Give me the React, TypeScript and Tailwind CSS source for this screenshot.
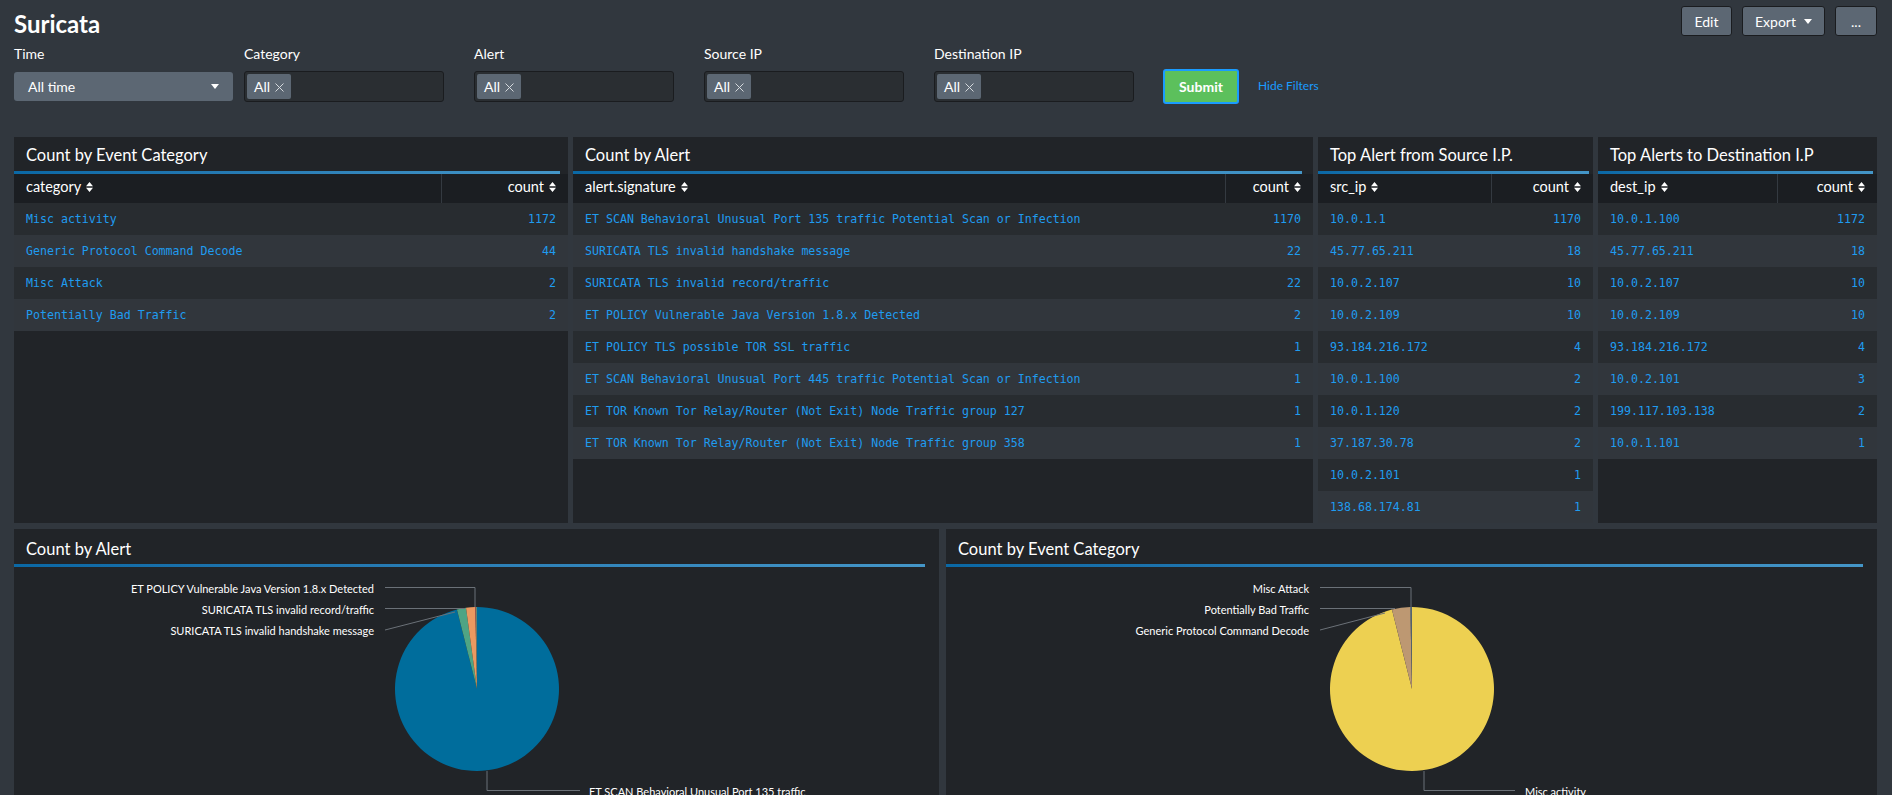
import clsx from "clsx";

type Row = [string, string];

const categoryRows: Row[] = [
  ["Misc activity", "1172"],
  ["Generic Protocol Command Decode", "44"],
  ["Misc Attack", "2"],
  ["Potentially Bad Traffic", "2"],
];

const alertRows: Row[] = [
  ["ET SCAN Behavioral Unusual Port 135 traffic Potential Scan or Infection", "1170"],
  ["SURICATA TLS invalid handshake message", "22"],
  ["SURICATA TLS invalid record/traffic", "22"],
  ["ET POLICY Vulnerable Java Version 1.8.x Detected", "2"],
  ["ET POLICY TLS possible TOR SSL traffic", "1"],
  ["ET SCAN Behavioral Unusual Port 445 traffic Potential Scan or Infection", "1"],
  ["ET TOR Known Tor Relay/Router (Not Exit) Node Traffic group 127", "1"],
  ["ET TOR Known Tor Relay/Router (Not Exit) Node Traffic group 358", "1"],
];

const srcRows: Row[] = [
  ["10.0.1.1", "1170"],
  ["45.77.65.211", "18"],
  ["10.0.2.107", "10"],
  ["10.0.2.109", "10"],
  ["93.184.216.172", "4"],
  ["10.0.1.100", "2"],
  ["10.0.1.120", "2"],
  ["37.187.30.78", "2"],
  ["10.0.2.101", "1"],
  ["138.68.174.81", "1"],
];

const destRows: Row[] = [
  ["10.0.1.100", "1172"],
  ["45.77.65.211", "18"],
  ["10.0.2.107", "10"],
  ["10.0.2.109", "10"],
  ["93.184.216.172", "4"],
  ["10.0.2.101", "3"],
  ["199.117.103.138", "2"],
  ["10.0.1.101", "1"],
];

function SortIcon() {
  return (
    <svg width="7" height="10" viewBox="0 0 7 10" className="ml-[5px] shrink-0">
      <path d="M0 4.2 L3.5 0 L7 4.2 Z M0 5.8 L3.5 10 L7 5.8 Z" fill="currentColor" />
    </svg>
  );
}

function Caret() {
  return (
    <svg width="8" height="5" viewBox="0 0 8 5">
      <path d="M0 0 H8 L4 5 Z" fill="currentColor" />
    </svg>
  );
}

function Chip() {
  return (
    <span className="h-[25px] px-[7px] bg-[#5c6773] rounded-[2px] flex items-center gap-[5px] text-[14px]">
      All
      <svg width="9" height="9" viewBox="0 0 9 9" className="mt-[2px]">
        <path d="M0.5 0.5 L8.5 8.5 M8.5 0.5 L0.5 8.5" stroke="#d5d9dd" strokeWidth="1" />
      </svg>
    </span>
  );
}

function MultiFilter({ label }: { label: string }) {
  return (
    <div className="w-[230px]">
      <div className="text-[14px] leading-[18px]">{label}</div>
      <div className="mt-[8px] w-[200px] h-[31px] bg-[#2a2e32] border border-[#1a1c1f] rounded-[3px] p-[2px] flex">
        <Chip />
      </div>
    </div>
  );
}

function TablePanel({
  title,
  field,
  rows,
  width,
  countWidth,
}: {
  title: string;
  field: string;
  rows: Row[];
  width: string;
  countWidth: string;
}) {
  return (
    <div className={clsx("flex flex-col bg-[#212428]", width)}>
      <div className="h-[34px] px-3 pt-[3px] flex items-center text-[16.5px] whitespace-nowrap">{title}</div>
      <div className="h-[3px] w-[98.5%] bg-linear-to-r from-[#0a68a5] to-[#4496c8]" />
      <div className="h-[29px] flex bg-[#1b1e22] text-[14.5px]">
        <div className="flex-1 flex items-center px-3 pb-[4px]">
          {field}
          <SortIcon />
        </div>
        <div className={clsx("flex items-center justify-end pr-3 pb-[4px] border-l border-[#343a41]", countWidth)}>
          count
          <SortIcon />
        </div>
      </div>
      {rows.map(([k, v], i) => (
        <div
          key={i}
          className={clsx(
            "h-[32px] flex items-center px-3 pt-[1px] text-[11.6px] text-[#1f9cf0] font-[family-name:'DejaVu_Sans_Mono',monospace]",
            i % 2 === 0 ? "bg-[#282c30]" : "bg-[#31363c]"
          )}
        >
          <span className="flex-1 whitespace-nowrap">{k}</span>
          <span>{v}</span>
        </div>
      ))}
    </div>
  );
}

function arc(cx: number, cy: number, r: number, a0: number, a1: number) {
  const rad = (a: number) => ((a - 90) * Math.PI) / 180;
  const x0 = cx + r * Math.cos(rad(a0));
  const y0 = cy + r * Math.sin(rad(a0));
  const x1 = cx + r * Math.cos(rad(a1));
  const y1 = cy + r * Math.sin(rad(a1));
  const large = a1 - a0 > 180 ? 1 : 0;
  return `M${cx},${cy} L${x0},${y0} A${r},${r} 0 ${large} 1 ${x1},${y1} Z`;
}

type Slice = { value: number; color: string };
type Leader = { text: string; d: string; y: number };

function PieChart({
  slices,
  labels,
  bottom,
}: {
  slices: Slice[];
  labels: Leader[];
  bottom: { text: string; d: string; x: number };
}) {
  const cx = 380;
  const cy = 122;
  const r = 82;
  const total = slices.reduce((s, x) => s + x.value, 0);
  let a = 0;
  return (
    <svg width="760" height="240" className="block mx-auto font-[family-name:Lato,sans-serif]">
      {slices.map((s, i) => {
        const a0 = a;
        a += (s.value / total) * 360;
        return <path key={i} d={arc(cx, cy, r, a0, a)} fill={s.color} />;
      })}
      {labels.map((l, i) => (
        <g key={i}>
          <path d={l.d} stroke="#6b7178" strokeWidth="1" fill="none" />
          <text x={cx - 103} y={l.y} textAnchor="end" dominantBaseline="central" fill="#ffffff" fontSize="11">
            {l.text}
          </text>
        </g>
      ))}
      <path d={bottom.d} stroke="#6b7178" strokeWidth="1" fill="none" />
      <text x={bottom.x} y={224} dominantBaseline="central" fill="#ffffff" fontSize="11">
        {bottom.text}
      </text>
    </svg>
  );
}

function PiePanel({ title, width, children }: { title: string; width: string; children: React.ReactNode }) {
  return (
    <div className={clsx("flex flex-col bg-[#212428] h-[300px]", width)}>
      <div className="h-[35px] px-3 pt-[5px] flex items-center text-[16.5px]">{title}</div>
      <div className="h-[3px] w-[98.5%] bg-linear-to-r from-[#0a68a5] to-[#4496c8]" />
      {children}
    </div>
  );
}

export default function App() {
  const cx = 380;
  return (
    <div className="h-[795px] overflow-hidden bg-[#31373e] text-white font-[family-name:Lato,sans-serif]">
      {/* Header */}
      <div className="flex items-start justify-between pl-[14px] pr-[15px]">
        <h1 className="mt-[9px] text-[24px] leading-[30px] font-bold">Suricata</h1>
        <div className="mt-[6px] flex gap-[10px] text-[14px]">
          <button className="w-[51px] h-[30px] bg-[#5c6773] border border-[#1a1c1f] rounded-[3px]">Edit</button>
          <button className="w-[83px] h-[30px] bg-[#5c6773] border border-[#1a1c1f] rounded-[3px] flex items-center justify-center gap-[8px]">
            Export
            <Caret />
          </button>
          <button className="w-[42px] h-[30px] bg-[#5c6773] border border-[#1a1c1f] rounded-[3px]">...</button>
        </div>
      </div>

      {/* Filters */}
      <div className="mt-[6px] pl-[14px] flex items-start">
        <div className="w-[230px]">
          <div className="text-[14px] leading-[18px]">Time</div>
          <div className="mt-[9px] w-[219px] h-[29px] bg-[#5c6773] rounded-[3px] flex items-center justify-between pl-[14px] pr-[14px] text-[14px]">
            All time
            <Caret />
          </div>
        </div>
        <MultiFilter label="Category" />
        <MultiFilter label="Alert" />
        <MultiFilter label="Source IP" />
        <MultiFilter label="Destination IP" />
        <button className="-ml-[1px] mt-[24px] w-[76px] h-[35px] bg-[#5cc05c] border-2 border-[#1a9cff] rounded-[3px] text-[14px] font-bold">
          Submit
        </button>
        <span className="ml-[19px] mt-[33px] text-[12px] leading-[16px] text-[#1a9cff]">Hide Filters</span>
      </div>

      {/* Tables row */}
      <div className="mt-[33px] pl-[14px] pr-[15px] flex gap-[5px]">
        <TablePanel title="Count by Event Category" field="category" rows={categoryRows} width="w-[554px]" countWidth="w-[127px]" />
        <TablePanel title="Count by Alert" field="alert.signature" rows={alertRows} width="w-[740px]" countWidth="w-[88px]" />
        <TablePanel title="Top Alert from Source I.P." field="src_ip" rows={srcRows} width="w-[275px]" countWidth="w-[102px]" />
        <TablePanel title="Top Alerts to Destination I.P" field="dest_ip" rows={destRows} width="w-[279px]" countWidth="w-[100px]" />
      </div>

      {/* Charts row */}
      <div className="mt-[6px] pl-[14px] pr-[15px] flex gap-[7px]">
        <PiePanel title="Count by Alert" width="w-[925px]">
          <PieChart
            slices={[
              { value: 1170, color: "#006d9c" },
              { value: 22, color: "#4fa484" },
              { value: 22, color: "#ec9960" },
              { value: 2, color: "#af575a" },
              { value: 1, color: "#b6c75a" },
              { value: 1, color: "#62b3b2" },
            ]}
            labels={[
              { text: "ET POLICY Vulnerable Java Version 1.8.x Detected", y: 21, d: `M${cx - 92},20.5 H${cx - 2} V40` },
              { text: "SURICATA TLS invalid record/traffic", y: 42, d: `M${cx - 92},41.5 H${cx - 12}` },
              { text: "SURICATA TLS invalid handshake message", y: 63, d: `M${cx - 92},63 L${cx - 22},45` },
            ]}
            bottom={{ text: "ET SCAN Behavioral Unusual Port 135 traffic", x: cx + 112, d: `M${cx + 10},204 V223.5 H${cx + 103}` }}
          />
        </PiePanel>
        <PiePanel title="Count by Event Category" width="w-[931px]">
          <PieChart
            slices={[
              { value: 1172, color: "#edd051" },
              { value: 44, color: "#bd9872" },
              { value: 2, color: "#738795" },
              { value: 2, color: "#5f6f7c" },
            ]}
            labels={[
              { text: "Misc Attack", y: 21, d: `M${cx - 92},20.5 H${cx - 1} V40` },
              { text: "Potentially Bad Traffic", y: 42, d: `M${cx - 92},41.5 H${cx - 17}` },
              { text: "Generic Protocol Command Decode", y: 63, d: `M${cx - 92},63 L${cx - 27},46` },
            ]}
            bottom={{ text: "Misc activity", x: cx + 113, d: `M${cx + 12},204 V223.5 H${cx + 103}` }}
          />
        </PiePanel>
      </div>
    </div>
  );
}
